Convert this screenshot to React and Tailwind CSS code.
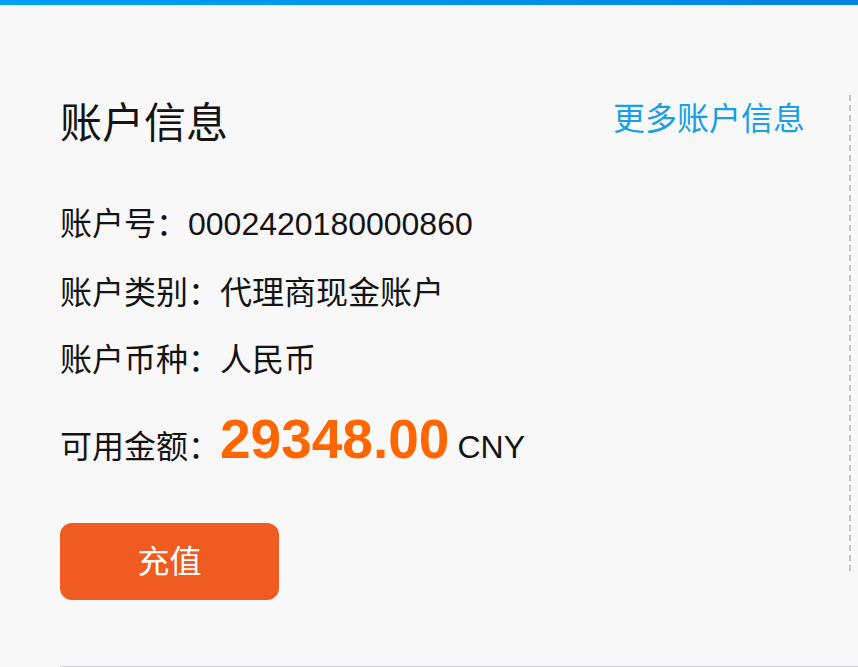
export default function App() {
  return (
    <div className="min-h-screen bg-[#f8f8f8] text-[#141414] font-['Liberation_Sans','Noto_Sans_CJK_SC',sans-serif]">
      <div className="h-[5px] bg-[linear-gradient(90deg,#00a1f6,#0084e4)]" />
      <div className="flex items-start pl-[60px] pt-[90px]">
        <div className="flex-1 pr-[44px]">
          <div className="mt-[8px] flex items-start justify-between">
            <h1 className="text-[42px] leading-[42px] font-normal">账户信息</h1>
            <a className="text-[32px] leading-[32px] text-[#1a9fe4]">更多账户信息</a>
          </div>
          <div className="mt-[63px] text-[32px] leading-[32px]">账户号：0002420180000860</div>
          <div className="mt-[37px] text-[32px] leading-[32px]">账户类别：代理商现金账户</div>
          <div className="mt-[35px] text-[32px] leading-[32px]">账户币种：人民币</div>
          <div className="mt-[35px] flex items-baseline text-[32px] leading-[56px]">
            <span>可用金额：</span>
            <span className="text-[55px] font-bold text-[#ff6600]">29348.00</span>
            <span className="ml-[8px]">CNY</span>
          </div>
          <button className="mt-[48px] flex h-[77px] w-[219px] items-center justify-center rounded-[12px] bg-[#f05b22] text-[32px] text-white">
            充值
          </button>
        </div>
        <div className="mr-[7px] h-[480px] w-[2px] bg-[repeating-linear-gradient(to_bottom,#c4c4c8_0_6px,transparent_6px_10px)]" />
      </div>
      <div className="ml-[60px] mt-[66px] h-px bg-[#d3d3db]" />
    </div>
  );
}
